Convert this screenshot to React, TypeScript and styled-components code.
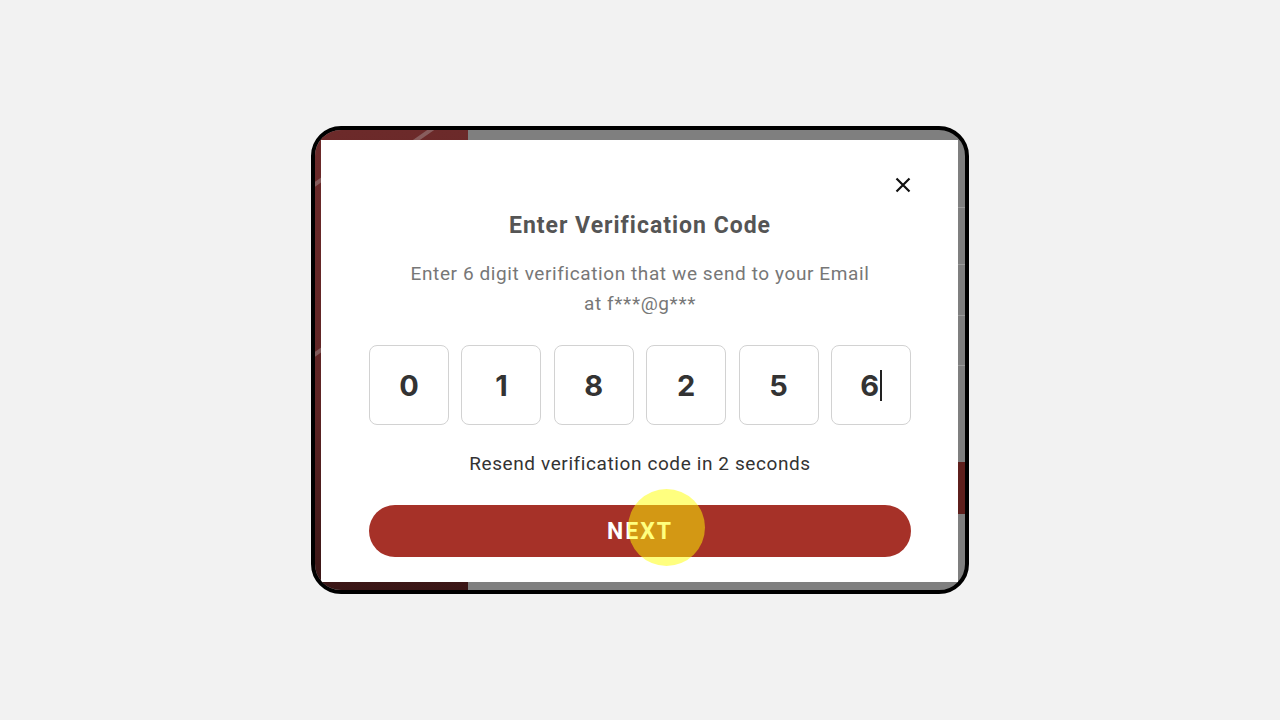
import React from "react";
import styled, { createGlobalStyle } from "styled-components";

const Global = createGlobalStyle`
  html, body { margin: 0; padding: 0; background: #f2f2f2; }
  body { font-family: Roboto, "Liberation Sans", sans-serif; }
`;

const Page = styled.div`
  width: 1280px;
  height: 720px;
  display: flex;
  align-items: center;
  justify-content: center;
`;

const Frame = styled.div`
  position: relative;
  width: 658px;
  height: 468px;
  box-sizing: border-box;
  border: 4px solid #000;
  border-radius: 30px;
  overflow: hidden;
  background: #7f7f7f;
  display: flex;
`;

const RedPanel = styled.div`
  width: 153px;
  flex: none;
  background: linear-gradient(180deg, #6c2a2a 0%, #5e2424 60%, #3a1616 100%);
  position: relative;
  overflow: hidden;
`;

const Streak = styled.div<{ $top: number; $left: number }>`
  position: absolute;
  top: ${(p) => p.$top}px;
  left: ${(p) => p.$left}px;
  width: 60px;
  height: 4px;
  background: rgba(190, 190, 190, 0.35);
  transform: rotate(-35deg);
`;

const GrayArea = styled.div`
  flex: 1;
  display: flex;
  justify-content: flex-end;
`;

const SideStrip = styled.div`
  width: 12px;
  display: flex;
  flex-direction: column;
`;

const StripGap = styled.div<{ $h: number }>`
  height: ${(p) => p.$h}px;
  flex: none;
`;

const StripLine = styled.div`
  height: 1px;
  background: #9a9a9a;
  flex: none;
`;

const StripBlock = styled.div`
  height: 52px;
  background: #5e1f1c;
  flex: none;
`;

const Modal = styled.div`
  position: absolute;
  left: 6px;
  top: 10px;
  width: 637px;
  height: 442px;
  background: #fff;
  box-sizing: border-box;
  padding: 37px 47px 25px 48px;
  display: flex;
  flex-direction: column;
  align-items: stretch;
`;

const CloseRow = styled.div`
  display: flex;
  justify-content: flex-end;
  height: 16px;
`;

const CloseBtn = styled.button`
  border: none;
  background: none;
  padding: 0;
  width: 16px;
  height: 16px;
  cursor: pointer;
  display: block;
`;

const Title = styled.h2`
  margin: 19px 0 0;
  font-family: Roboto, "Liberation Sans", sans-serif;
  font-weight: 700;
  font-size: 23px;
  line-height: 28px;
  color: #555;
  text-align: center;
  letter-spacing: 1px;
`;

const Subtitle = styled.p`
  margin: 19px 0 0;
  font-family: Roboto, "Liberation Sans", sans-serif;
  font-size: 19px;
  line-height: 30px;
  color: #777;
  text-align: center;
  letter-spacing: 0.6px;
`;

const Codes = styled.div`
  margin-top: 26px;
  display: grid;
  grid-template-columns: repeat(6, 80px);
  justify-content: space-between;
`;

const CodeBox = styled.div`
  width: 80px;
  height: 80px;
  box-sizing: border-box;
  border: 1px solid #d2d2d2;
  border-radius: 8px;
  display: flex;
  align-items: center;
  justify-content: center;
  font-family: Inter, "Open Sans", sans-serif;
  font-weight: 700;
  font-size: 29px;
  color: #333;
`;

const Caret = styled.span`
  display: inline-block;
  width: 1.5px;
  height: 31px;
  background: #222;
  margin-left: 1px;
`;

const Resend = styled.p`
  margin: 27px 0 0;
  font-family: Roboto, "Liberation Sans", sans-serif;
  font-size: 19px;
  line-height: 24px;
  color: #333;
  text-align: center;
  letter-spacing: 0.6px;
`;

const NextBtn = styled.button`
  margin-top: 29px;
  height: 52px;
  border: none;
  border-radius: 26px;
  background: #a63128;
  color: #fff;
  font-family: Roboto, "Liberation Sans", sans-serif;
  font-weight: 700;
  font-size: 23px;
  letter-spacing: 2px;
  cursor: pointer;
`;

const Touch = styled.div`
  position: absolute;
  left: 307px;
  top: 349px;
  width: 77px;
  height: 77px;
  border-radius: 50%;
  background: rgba(255, 255, 0, 0.5);
  pointer-events: none;
`;

const digits = ["0", "1", "8", "2", "5", "6"];

export default function App() {
  return (
    <>
      <Global />
      <Page>
        <Frame>
          <RedPanel>
            <Streak $top={2} $left={80} />
            <Streak $top={62} $left={-44} />
            <Streak $top={232} $left={-44} />
          </RedPanel>
          <GrayArea>
            <SideStrip>
              <StripGap $h={77} />
              <StripLine />
              <StripGap $h={56} />
              <StripLine />
              <StripGap $h={50} />
              <StripLine />
              <StripGap $h={49} />
              <StripLine />
              <StripGap $h={96} />
              <StripBlock />
            </SideStrip>
          </GrayArea>
          <Modal>
            <CloseRow>
              <CloseBtn aria-label="Close">
                <svg width="16" height="16" viewBox="0 0 16 16">
                  <path d="M1.5 1.5 L14.5 14.5 M14.5 1.5 L1.5 14.5" stroke="#111" strokeWidth="2.2" />
                </svg>
              </CloseBtn>
            </CloseRow>
            <Title>Enter Verification Code</Title>
            <Subtitle>
              Enter 6 digit verification that we send to your Email
              <br />
              at f***@g***
            </Subtitle>
            <Codes>
              {digits.map((d, i) => (
                <CodeBox key={i}>
                  {d}
                  {i === digits.length - 1 && <Caret />}
                </CodeBox>
              ))}
            </Codes>
            <Resend>Resend verification code in 2 seconds</Resend>
            <NextBtn>NEXT</NextBtn>
            <Touch />
          </Modal>
        </Frame>
      </Page>
    </>
  );
}
